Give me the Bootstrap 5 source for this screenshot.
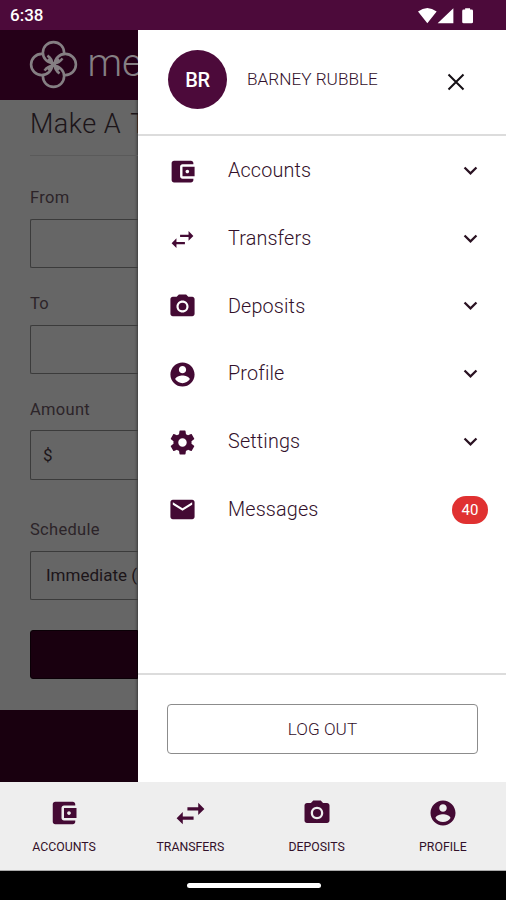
<!DOCTYPE html>
<html lang="en">
<head>
<meta charset="utf-8">
<meta name="viewport" content="width=device-width, initial-scale=1">
<title>Mobile banking menu</title>
<link href="https://cdn.jsdelivr.net/npm/bootstrap@5.3.0/dist/css/bootstrap.min.css" rel="stylesheet">
<style>
:root { --plum: #4c0a3a; --ink: #32102a; }
body { font-family: Roboto, "Liberation Sans", sans-serif; color: var(--ink); }
svg { display: block; flex: none; fill: currentColor; }
.phone { width: 506px; height: 900px; background: #fff; }
.status { height: 30px; background: var(--plum); padding: 1px 32px 0 10px; font-size: 17px; }
.stage { height: 752px; }
.dimmed { width: 138px; background: #666; color: #1c1519; box-shadow: inset -3px 0 3px -2px rgba(0,0,0,.45); }
.brand { height: 70px; background: #250018; padding: 0 0 1px 29px; color: #857f83; }
.logo { fill: none; stroke: currentColor; stroke-width: 2.600; }
.brand-name { font-size: 39px; font-weight: 300; line-height: 60px; margin: -4px 0 0 9.500px; }
.form-side { padding-left: 30px; height: 610px; }
.screen-title { font-size: 27px; line-height: 32px; padding-top: 8px; height: 56px; letter-spacing: .5px; border-bottom: 1px solid #5a5a5a; margin: 0; font-weight: 300; }
.screen-title span { margin-left: 2px; }
.field-label { font-size: 16.500px; line-height: 20px; letter-spacing: .3px; color: #2c2429; margin: 26px 0 11px; }
.first-label { margin-top: 32px; }
.late-label { margin-top: 40px; }
.field { height: 49px; border: 1px solid #3b3b3b; border-right: 0; border-radius: 2px 0 0 2px; letter-spacing: 0; font-size: 17px; }
.amount { padding: 2px 0 0 12px; height: 50px; margin-top: -1px; }
.schedule { padding: 0 0 0 15px; }
.submit { height: 49px; background: #19000f; border: 1px solid #0a0006; border-radius: 3px 0 0 3px; margin-top: 30px; }
.foot { height: 72px; background: #19000f; }
.drawer-head { height: 106px; border-bottom: 2px solid #dcdcdc; padding: 0 40px 5px 30px; }
.avatar { width: 59px; height: 59px; background: var(--plum); font-size: 20px; font-weight: 500; letter-spacing: -.4px; }
.person { font-size: 17.200px; margin-left: 20px; font-weight: 300; }
.menu { padding: 1px 18px 0 30px; }
.menu-item { height: 67.700px; }
.menu-text { font-size: 19.800px; font-weight: 300; letter-spacing: .15px; margin-left: 31px; line-height: 24px; padding-top: 1px; }
.ico { color: #440a34; }
.menu .ico { margin-top: 1px; }
.chev { margin-right: 4px; margin-bottom: 1px; color: #2a1222; }
.count { width: 36px; height: 28px; background: #e03131; font-size: 15px; margin-top: 1px; }
.drawer-foot { border-top: 2px solid #dcdcdc; padding: 29px 28px 28px 29px; }
.logout { height: 50px; border: 1px solid #8c8c8c; border-radius: 4px; color: var(--ink); font-size: 17.200px; font-weight: 300; padding: 2px 0 0; }
.tabs { height: 89px; background: #eee; padding: 0 0 0 1px; border-bottom: 1px solid #aaa; font-size: 12.300px; }
.tab-ico { height: 30px; margin-top: 16px; }
.tab-text { line-height: 16px; margin-top: 11px; }
.home { height: 29px; background: #000; }
.pill { width: 134px; height: 5px; background: #fff; margin-left: 1px; }
</style>
</head>
<body>
<svg class="d-none" xmlns="http://www.w3.org/2000/svg">
  <symbol id="wallet" viewBox="0 0 24 24"><path d="M21 18v1c0 1.100-.9 2-2 2H5c-1.110 0-2-.9-2-2V5c0-1.100.89-2 2-2h14c1.100 0 2 .9 2 2v1h-9c-1.110 0-2 .9-2 2v8c0 1.100.89 2 2 2h9zm-9-2h10V8H12v8zm4-2.500c-.83 0-1.500-.67-1.500-1.500s.67-1.500 1.500-1.500 1.500.67 1.500 1.500-.67 1.500-1.500 1.500z"/></symbol>
  <symbol id="swap" viewBox="0 0 24 24"><path d="M6.990 11L3 15l3.990 4v-3H14v-2H6.990v-3zM21 9l-3.990-4v3H10v2h7.010v3L21 9z"/></symbol>
  <symbol id="camera" viewBox="0 0 24 24"><path d="M9 2L7.170 4H4c-1.100 0-2 .9-2 2v12c0 1.100.9 2 2 2h16c1.100 0 2-.9 2-2V6c0-1.100-.9-2-2-2h-3.170L15 2H9zm3 15c-2.760 0-5-2.240-5-5s2.240-5 5-5 5 2.240 5 5-2.240 5-5 5z"/><circle cx="12" cy="12" r="3.200"/></symbol>
  <symbol id="person" viewBox="0 0 24 24"><path d="M12 2C6.480 2 2 6.480 2 12s4.480 10 10 10 10-4.480 10-10S17.520 2 12 2zm0 3c1.660 0 3 1.340 3 3s-1.340 3-3 3-3-1.340-3-3 1.340-3 3-3zm0 14.200c-2.500 0-4.710-1.280-6-3.220.03-1.990 4-3.080 6-3.080 1.990 0 5.970 1.090 6 3.080-1.290 1.940-3.500 3.220-6 3.220z"/></symbol>
  <symbol id="gear" viewBox="0 0 24 24"><path d="M19.430 12.980c.04-.32.07-.64.07-.98s-.03-.66-.07-.98l2.110-1.650c.19-.15.24-.42.12-.64l-2-3.460c-.12-.22-.39-.3-.61-.22l-2.490 1c-.52-.4-1.080-.73-1.690-.98l-.38-2.650C14.460 2.180 14.250 2 14 2h-4c-.25 0-.46.18-.49.42l-.38 2.650c-.61.25-1.170.59-1.690.98l-2.490-1c-.23-.09-.49 0-.61.22l-2 3.460c-.13.22-.07.49.12.64l2.110 1.650c-.04.32-.07.65-.07.98s.03.66.07.98l-2.110 1.650c-.19.15-.24.42-.12.64l2 3.460c.12.22.39.3.61.22l2.490-1c.52.4 1.080.73 1.690.98l.38 2.650c.03.24.24.42.49.42h4c.25 0 .46-.18.49-.42l.38-2.650c.61-.25 1.170-.59 1.690-.98l2.490 1c.23.09.49 0 .61-.22l2-3.460c.12-.22.07-.49-.12-.64l-2.110-1.650zM12 15.500c-1.930 0-3.500-1.570-3.500-3.500s1.570-3.500 3.500-3.500 3.500 1.570 3.500 3.500-1.570 3.500-3.500 3.500z"/></symbol>
  <symbol id="mail" viewBox="0 0 24 24"><path d="M20 4H4c-1.100 0-1.990.9-1.990 2L2 18c0 1.100.9 2 2 2h16c1.100 0 2-.9 2-2V6c0-1.100-.9-2-2-2zm0 4l-8 5-8-5V6l8 5 8-5v2z"/></symbol>
  <symbol id="down" viewBox="0 0 24 24"><path d="M7.410 8.590L12 13.170l4.590-4.580L18 10l-6 6-6-6z"/></symbol>
</svg>
<main class="phone d-flex flex-column overflow-hidden">
  <header class="status d-flex align-items-center text-white fw-medium">
    <span class="me-auto">6:38</span>
    <svg width="56" height="18" viewBox="0 0 57 18"><path d="M0 4.500Q9.500-3 19 4.500L9.500 16.500zM36 1V16.500H20zM48 1h5v1.500h1.500A1.500 1.500 0 0 1 56 4v11a1.500 1.500 0 0 1-1.500 1.500h-8A1.500 1.500 0 0 1 45 15V4a1.500 1.500 0 0 1 1.500-1.500H48z"/></svg>
  </header>
  <div class="stage d-flex">
    <section class="dimmed overflow-hidden text-nowrap flex-shrink-0">
      <div class="brand d-flex align-items-center">
        <svg class="logo" width="49" height="49" viewBox="-24.500 -24.500 49 49">
          <path d="M-5.500-5.500L5.500 5.500M5.500-5.500L-5.500 5.500"/>
          <circle cy="-11.800" r="10.600" stroke-dasharray="62 4.600" stroke-dashoffset="-6"/>
          <circle cy="-11.800" r="10.600" stroke-dasharray="62 4.600" stroke-dashoffset="-6" transform="rotate(90)"/>
          <circle cy="-11.800" r="10.600" stroke-dasharray="62 4.600" stroke-dashoffset="-6" transform="rotate(180)"/>
          <circle cy="-11.800" r="10.600" stroke-dasharray="62 4.600" stroke-dashoffset="-6" transform="rotate(270)"/>
        </svg>
        <span class="brand-name">me</span>
      </div>
      <div class="form-side">
        <h1 class="screen-title">Make A <span>T</span></h1>
        <div class="field-label first-label">From</div>
        <div class="field"></div>
        <div class="field-label">To</div>
        <div class="field"></div>
        <div class="field-label">Amount</div>
        <div class="field amount d-flex align-items-center">$</div>
        <div class="field-label late-label">Schedule</div>
        <div class="field schedule d-flex align-items-center">Immediate (</div>
        <div class="submit"></div>
      </div>
      <div class="foot"></div>
    </section>
    <aside class="flex-grow-1 bg-white d-flex flex-column">
      <div class="drawer-head d-flex align-items-center">
        <div class="avatar rounded-circle text-white d-flex align-items-center justify-content-center">BR</div>
        <div class="person me-auto">BARNEY RUBBLE</div>
        <svg class="mt-1" width="20" height="20" viewBox="0 0 20 20"><path d="M2.500 2.500l15 15M17.500 2.500l-15 15" stroke="#151015" stroke-width="2"/></svg>
      </div>
      <nav class="menu">
        <div class="menu-item d-flex align-items-center"><svg class="ico" width="29" height="29"><use href="#wallet"/></svg><span class="menu-text me-auto">Accounts</span><svg class="chev" width="27" height="27"><use href="#down"/></svg></div>
        <div class="menu-item d-flex align-items-center"><svg class="ico" width="29" height="29"><use href="#swap"/></svg><span class="menu-text me-auto">Transfers</span><svg class="chev" width="27" height="27"><use href="#down"/></svg></div>
        <div class="menu-item d-flex align-items-center"><svg class="ico" width="29" height="29"><use href="#camera"/></svg><span class="menu-text me-auto">Deposits</span><svg class="chev" width="27" height="27"><use href="#down"/></svg></div>
        <div class="menu-item d-flex align-items-center"><svg class="ico" width="29" height="29"><use href="#person"/></svg><span class="menu-text me-auto">Profile</span><svg class="chev" width="27" height="27"><use href="#down"/></svg></div>
        <div class="menu-item d-flex align-items-center"><svg class="ico" width="29" height="29"><use href="#gear"/></svg><span class="menu-text me-auto">Settings</span><svg class="chev" width="27" height="27"><use href="#down"/></svg></div>
        <div class="menu-item d-flex align-items-center"><svg class="ico" width="29" height="29"><use href="#mail"/></svg><span class="menu-text me-auto">Messages</span><span class="count rounded-pill text-white d-flex align-items-center justify-content-center">40</span></div>
      </nav>
      <div class="drawer-foot mt-auto"><button type="button" class="logout btn w-100">LOG OUT</button></div>
    </aside>
  </div>
  <nav class="tabs d-flex text-center">
    <div class="col-3 d-flex flex-column align-items-center"><span class="tab-ico d-flex align-items-center"><svg class="ico" width="30" height="30"><use href="#wallet"/></svg></span><span class="tab-text">ACCOUNTS</span></div>
    <div class="col-3 d-flex flex-column align-items-center"><span class="tab-ico d-flex align-items-center"><svg class="ico" width="37" height="37"><use href="#swap"/></svg></span><span class="tab-text">TRANSFERS</span></div>
    <div class="col-3 d-flex flex-column align-items-center"><span class="tab-ico d-flex align-items-center"><svg class="ico" width="30" height="30"><use href="#camera"/></svg></span><span class="tab-text">DEPOSITS</span></div>
    <div class="col-3 d-flex flex-column align-items-center"><span class="tab-ico d-flex align-items-center"><svg class="ico" width="30" height="30"><use href="#person"/></svg></span><span class="tab-text">PROFILE</span></div>
  </nav>
  <div class="home d-flex align-items-center justify-content-center"><div class="pill rounded-pill"></div></div>
</main>
<script src="https://cdn.jsdelivr.net/npm/bootstrap@5.3.0/dist/js/bootstrap.bundle.min.js"></script>
</body>
</html>
